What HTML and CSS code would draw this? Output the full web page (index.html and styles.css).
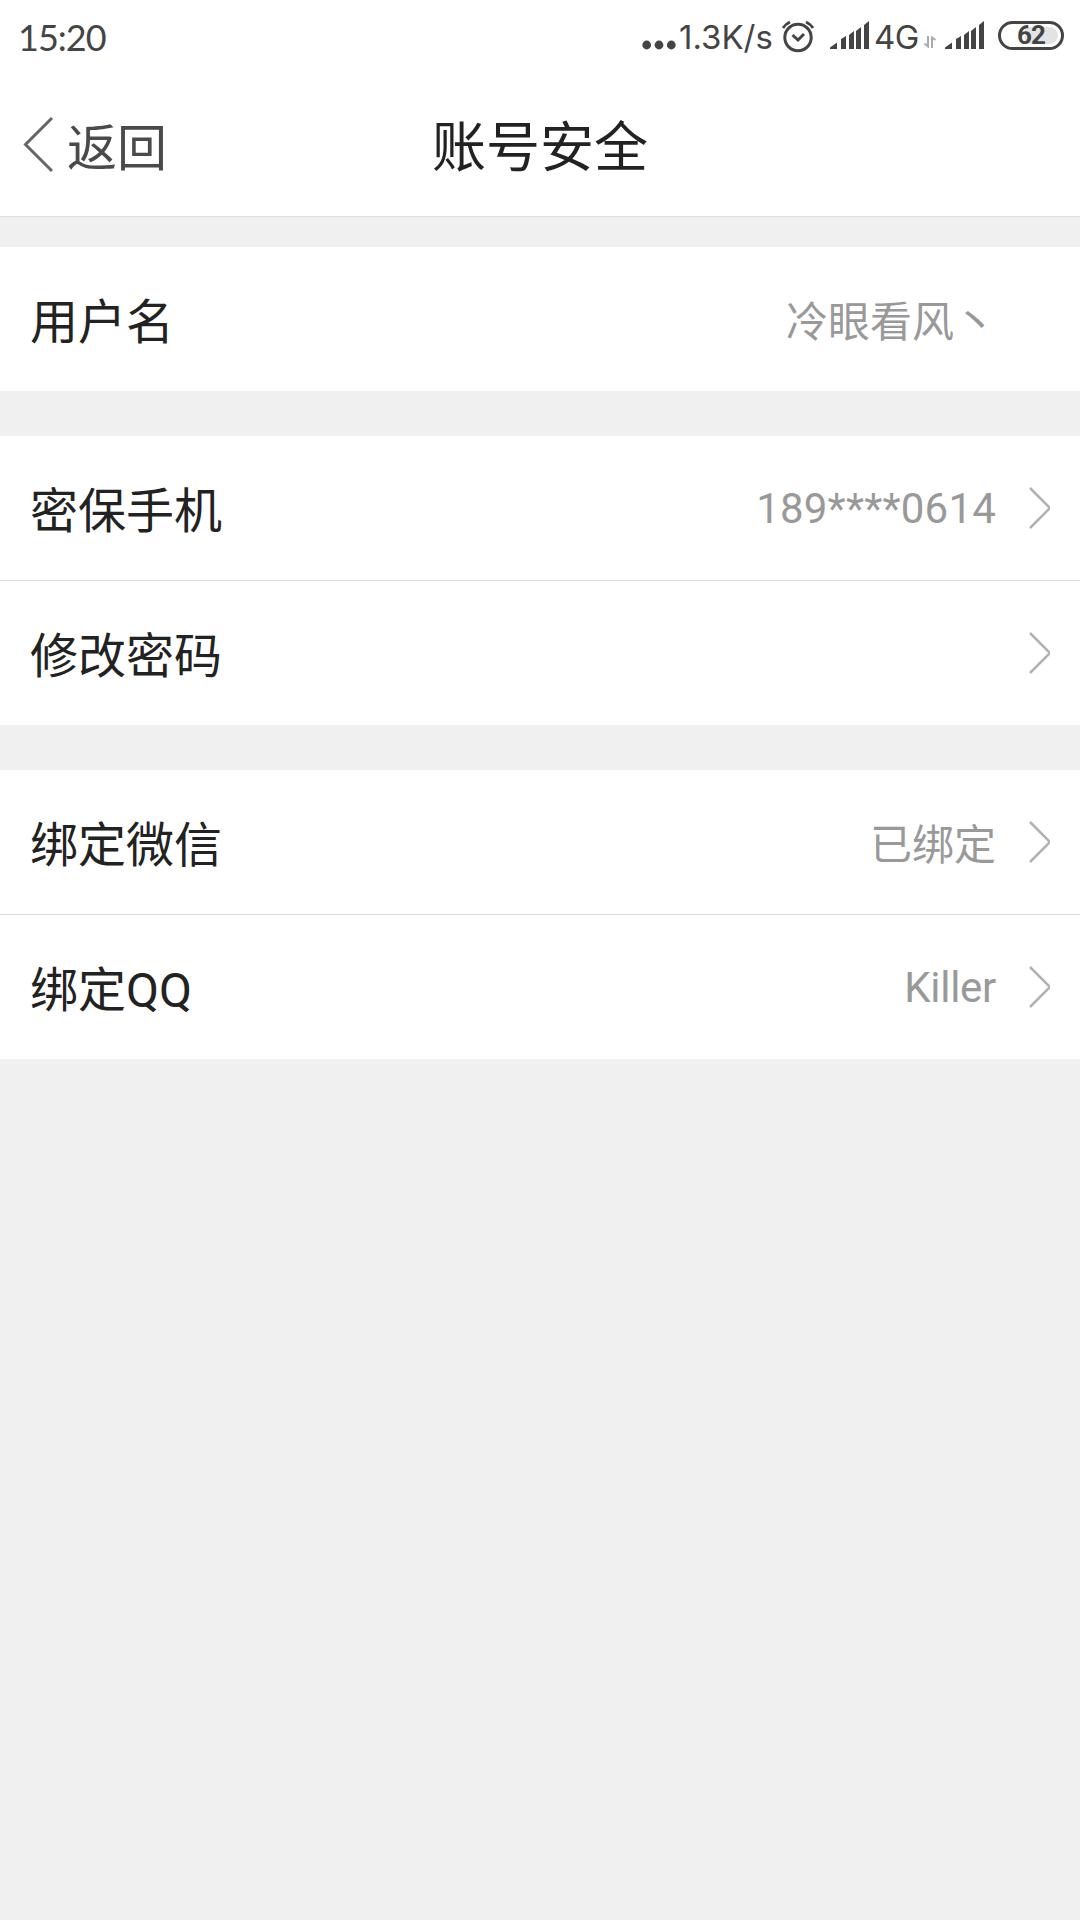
FILE: index.html
```html
<!DOCTYPE html>
<html lang="zh-CN">
<head>
    <meta charset="UTF-8">
    <meta name="viewport" content="width=device-width, initial-scale=1.0">
    <title>账号安全</title>
    <link rel="stylesheet" href="styles.css">
</head>
<body>
    <div class="status-bar">
        <span class="time">15:20</span>
        <div class="status-icons">
            <svg class="dots" width="34" height="10" viewBox="0 0 34 10">
                <circle cx="4.7" cy="5" r="4.4"/>
                <circle cx="17" cy="5" r="4.4"/>
                <circle cx="29.3" cy="5" r="4.4"/>
            </svg>
            <span class="speed">1.3K/s</span>
            <svg class="alarm" width="34" height="34" viewBox="0 0 34 34">
                <circle cx="17" cy="18.5" r="13.2"/>
                <path d="M11.500 16l5.500 5 6-6M2 9Q4.500 5 9 3M25 3Q29.500 5 32 9"/>
            </svg>
            <svg class="signal" width="39" height="29" viewBox="0 0 39 29">
                <path d="M0 28v-1.500l7-5v6.500zM11 28v-10l5-3v13zM19 28v-14l5-4v18zM26 28v-18l5-4v22zM34 28v-24l5-4v28z"/>
            </svg>
            <span class="network">4G</span>
            <svg class="arrows" width="12" height="12" viewBox="0 0 12 12">
                <path d="M4 0v10.500L.5 7.500M8 12V1.500L11.500 4"/>
            </svg>
            <svg class="signal" width="39" height="29" viewBox="0 0 39 29">
                <path d="M0 28v-1.500l7-5v6.500zM11 28v-10l5-3v13zM19 28v-14l5-4v18zM26 28v-18l5-4v22zM34 28v-24l5-4v28z"/>
            </svg>
            <div class="battery"><span>62</span></div>
        </div>
    </div>

    <div class="header">
        <a class="back">
            <svg width="32" height="58" viewBox="0 0 32 58">
                <path d="M29 2L2.500 28.500L29 55"/>
            </svg>
            <span>返回</span>
        </a>
        <h1>账号安全</h1>
    </div>

    <div class="group">
        <div class="item">
            <span class="label">用户名</span>
            <span class="value">冷眼看风丶</span>
        </div>
    </div>

    <div class="group">
        <div class="item">
            <span class="label">密保手机</span>
            <span class="value phone">189****0614</span>
            <svg class="arrow" width="21" height="44" viewBox="0 0 21 44"><path d="M1 2l20 20L1 42"/></svg>
        </div>
        <div class="item">
            <span class="label">修改密码</span>
            <span class="value"></span>
            <svg class="arrow" width="21" height="44" viewBox="0 0 21 44"><path d="M1 2l20 20L1 42"/></svg>
        </div>
    </div>

    <div class="group">
        <div class="item">
            <span class="label">绑定微信</span>
            <span class="value">已绑定</span>
            <svg class="arrow" width="21" height="44" viewBox="0 0 21 44"><path d="M1 2l20 20L1 42"/></svg>
        </div>
        <div class="item">
            <span class="label">绑定QQ</span>
            <span class="value nickname">Killer</span>
            <svg class="arrow" width="21" height="44" viewBox="0 0 21 44"><path d="M1 2l20 20L1 42"/></svg>
        </div>
    </div>
</body>
</html>
```
FILE: styles.css
```css
* {
    box-sizing: border-box;
}

body {
    margin: 0;
    min-height: 100vh;
    background-color: #f0f0f0;
    font-family: Roboto, "Noto Sans CJK SC", sans-serif;
    color: #222;
}

svg {
    display: block;
    flex-shrink: 0;
}

.status-bar {
    display: flex;
    justify-content: space-between;
    height: 74px;
    padding: 0 16px 0 18px;
    background: #fff;
    color: #444;
    line-height: 74px;
}

.time {
    font-family: Lato, sans-serif;
    font-size: 36px;
    letter-spacing: -1px;
}

.status-icons {
    display: flex;
    font-family: Inter, sans-serif;
}

.dots {
    margin-top: 40px;
    fill: #444;
}

.speed {
    width: 98px;
    padding-left: 3px;
    font-size: 33px;
}

.alarm {
    margin: 19px 15px 0 7px;
    fill: none;
    stroke: #444;
    stroke-width: 3;
}

.signal {
    margin-top: 21px;
    fill: #444;
}

.network {
    width: 50px;
    padding-left: 5px;
    font-size: 33px;
    letter-spacing: -0.5px;
}

.arrows {
    margin: 36px 9px 0 5px;
    fill: none;
    stroke: #aaa;
    stroke-width: 2;
}

.battery {
    width: 66px;
    height: 29px;
    margin: 21px 0 0 14px;
    padding: 3px;
    border: 3px solid #444;
    border-radius: 15px;
    background: #fff;
    font-family: Roboto, sans-serif;
    font-size: 26px;
    font-weight: 700;
    letter-spacing: -1px;
    line-height: 17px;
    text-align: center;
}

.battery span {
    display: block;
    border-radius: 9px;
    background: linear-gradient(to right, #fff 38%, #e3e3e3 38%);
}

.header {
    position: relative;
    display: flex;
    align-items: center;
    justify-content: center;
    height: 143px;
    margin-bottom: 30px;
    border-bottom: 1px solid #dcdcdc;
    background: #fff;
}

.header h1 {
    margin: 0;
    padding-top: 8px;
    font-size: 54px;
    font-weight: 400;
    line-height: 80px;
}

.back {
    position: absolute;
    left: 23px;
    display: flex;
    align-items: center;
    color: #4a4a4a;
    font-size: 50px;
    line-height: 74px;
}

.back span {
    padding-top: 7px;
}

.back svg {
    margin-right: 12px;
    fill: none;
    stroke: #666;
    stroke-width: 3;
}

.group {
    margin-bottom: 45px;
    background: #fff;
}

.item {
    display: flex;
    align-items: center;
    height: 144px;
    padding: 0 30px 0 30px;
}

.item + .item {
    height: 145px;
    border-top: 1px solid #dcdcdc;
}

.label {
    padding-bottom: 3px;
    font-size: 48px;
}

.value {
    margin-left: auto;
    margin-right: 54px;
    padding-bottom: 1px;
    color: #999;
    font-size: 42px;
}

.phone {
    padding-top: 2px;
    letter-spacing: 0.2px;
}

.nickname {
    padding-top: 2px;
    letter-spacing: -0.3px;
}

.value + .arrow {
    margin-left: -21px;
    fill: none;
    stroke: #b2b2b2;
    stroke-width: 2.5;
}
```
